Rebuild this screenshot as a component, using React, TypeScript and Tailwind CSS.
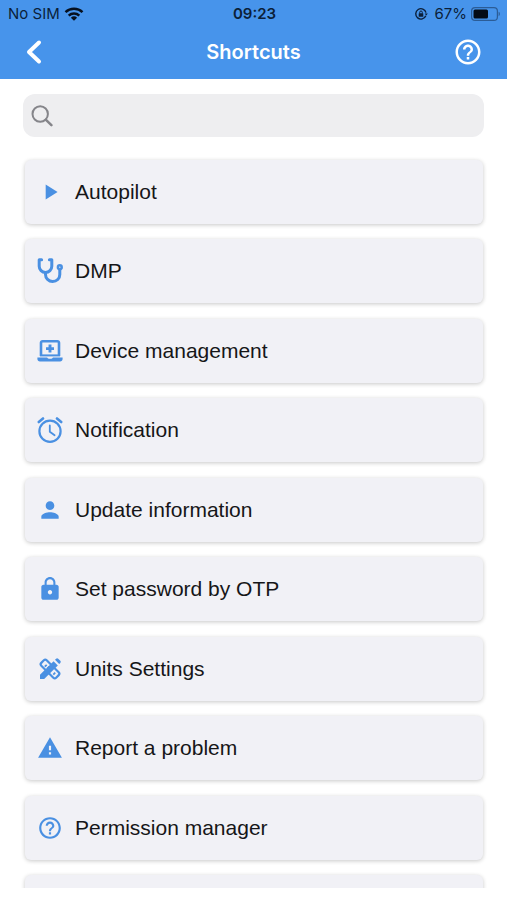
import { useState } from 'react';
import type { ComponentType } from 'react';
import {
  MdHelpOutline,
  MdLock,
  MdPerson,
  MdPlayArrow,
  MdWarning,
} from 'react-icons/md';

type IconProps = { className?: string };

type Shortcut = {
  id: string;
  label: string;
  icon?: ComponentType<IconProps>;
};

function StethoscopeIcon({ className }: IconProps) {
  return (
    <svg viewBox="0 0 26 26" fill="none" stroke="currentColor" strokeWidth="3" strokeLinecap="round" className={className}>
      <path d="M4.6 1.800H2.200v6.400a6.300 6.300 0 0 0 12.600 0V1.800h-2.400" strokeLinejoin="round" />
      <path d="M8.500 14.800v1.600a7.100 7.100 0 0 0 7.100 7.100c4.200 0 7.200-3.100 7.200-7.100v-5" />
      <circle cx="22.800" cy="9.200" r="1.900" strokeWidth="2.500" />
    </svg>
  );
}

function LaptopMedicalIcon({ className }: IconProps) {
  return (
    <svg viewBox="0 0 26 26" fill="none" className={className}>
      <path d="M4 18V4.800a1.600 1.600 0 0 1 1.600-1.600h14.800A1.600 1.600 0 0 1 22 4.800V18" stroke="currentColor" strokeWidth="2.600" />
      <path d="M3 17.400h20" stroke="currentColor" strokeWidth="2" />
      <path d="M13 6.600v8M9 10.600h8" stroke="currentColor" strokeWidth="2.900" />
      <path d="M.4 19.600h9.800c.3.800.9 1.100 1.600 1.100h2.600c.7 0 1.200-.3 1.500-1.100h9.700v1.400c0 1.400-1.100 2.500-2.500 2.500H2.900C1.500 23.500.4 22.400.4 21z" fill="currentColor" />
    </svg>
  );
}

function AlarmIcon({ className }: IconProps) {
  return (
    <svg viewBox="0 0 26 26" fill="none" stroke="currentColor" strokeWidth="2.200" className={className}>
      <circle cx="13" cy="14.2" r="10.6" />
      <path d="M12.800 8.500v6.200l4.800 3.500" strokeWidth="1.800" strokeLinecap="round" strokeLinejoin="round" />
      <path d="M1.800 5 6 1.500M20 1.500l4.200 3.500" strokeWidth="2.600" strokeLinecap="round" />
    </svg>
  );
}

// ruler crossed by a pencil
function DesignToolsIcon({ className }: IconProps) {
  return (
    <svg viewBox="0 0 26 26" fill="none" stroke="currentColor" className={className}>
      <rect x="2.500" y="9.200" width="21" height="7.600" rx="2" strokeWidth="2.200" transform="rotate(45 13 13)" />
      <path d="M7.800 10.700l1.900-1.900M10.300 12.600l1.900-1.900M16.300 18.600l1.900-1.900" strokeWidth="1.800" />
      <path d="M3 23v-4.200L16.600 5.200l4.200 4.200L7.200 23z" fill="currentColor" stroke="none" />
      <path d="m18 3.800 1.100-1.100a1.500 1.500 0 0 1 2.100 0l2.100 2.100a1.500 1.500 0 0 1 0 2.100L22.200 8z" fill="currentColor" stroke="none" />
    </svg>
  );
}

const shortcuts: Shortcut[] = [
  { id: 'autopilot', label: 'Autopilot', icon: MdPlayArrow },
  { id: 'dmp', label: 'DMP', icon: StethoscopeIcon },
  { id: 'devices', label: 'Device management', icon: LaptopMedicalIcon },
  { id: 'notification', label: 'Notification', icon: AlarmIcon },
  { id: 'update', label: 'Update information', icon: MdPerson },
  { id: 'otp', label: 'Set password by OTP', icon: MdLock },
  { id: 'units', label: 'Units Settings', icon: DesignToolsIcon },
  { id: 'report', label: 'Report a problem', icon: MdWarning },
  { id: 'permission', label: 'Permission manager', icon: MdHelpOutline },
  { id: 'more', label: '' },
];

function StatusBar() {
  return (
    <div className="grid grid-cols-3 items-center h-7 pl-2 pr-1.5 text-[15px] text-[#0b1f3a]">
      <div className="flex items-center gap-1">
        <span>No SIM</span>
        <svg viewBox="0 0 20 14" className="w-5 h-4" fill="none" stroke="#06101f" strokeWidth="2.500">
          <path d="M1.500 5.200a12.500 12.500 0 0 1 17 0" />
          <path d="M4.700 8.600a7.800 7.800 0 0 1 10.600 0" />
          <path d="M10 13.800 6.900 10.700a4.500 4.500 0 0 1 6.200 0z" fill="#06101f" stroke="none" />
        </svg>
      </div>
      <span className="text-center font-semibold">09:23</span>
      <div className="flex items-center justify-end gap-1">
        <svg viewBox="0 0 14 14" className="w-3.5 h-3.5 mr-0.5" fill="none" stroke="currentColor" strokeWidth="1.400">
          <path d="M11.800 8.800A5.200 5.200 0 1 1 12 5.600" />
          <path d="m10.600 6.400 1.700 2.200 1.500-2.200z" fill="currentColor" stroke="none" />
          <rect x="4.700" y="6.300" width="4.600" height="3.500" rx=".5" fill="currentColor" stroke="none" />
          <path d="M5.700 6.500V5.300a1.300 1.300 0 0 1 2.600 0v1.200" strokeWidth="1" />
        </svg>
        <span>67%</span>
        <svg viewBox="0 0 30 14" className="w-[30px] h-3.5" fill="none">
          <rect x=".6" y=".6" width="25.800" height="12.800" rx="3.500" stroke="#2b5c96" strokeWidth="1.200" />
          <rect x="2.500" y="2.500" width="14.500" height="9" rx="1.500" fill="#030a14" />
          <path d="M27.600 4.800c1.700.6 1.700 3.800 0 4.400z" fill="#2b5c96" />
        </svg>
      </div>
    </div>
  );
}

function App() {
  const [query, setQuery] = useState('');

  const visible = shortcuts.filter((s) =>
    s.label.toLowerCase().includes(query.toLowerCase())
  );

  return (
    <div className="flex flex-col h-screen pb-3 bg-white">
      <header className="shrink-0 bg-[#4794eb] font-['Inter',sans-serif]">
        <StatusBar />
        <nav className="grid grid-cols-[1fr_auto_1fr] items-center h-[51px] px-6 pb-1 text-white">
          <button aria-label="Back" className="justify-self-start">
            <svg viewBox="0 0 20 26" className="w-5 h-[26px]" fill="none" stroke="currentColor" strokeWidth="4" strokeLinecap="round" strokeLinejoin="round">
              <path d="M15 3.500 5 13l10 9.500" />
            </svg>
          </button>
          <h1 className="text-xl font-semibold">Shortcuts</h1>
          <button aria-label="Help" className="justify-self-end">
            <MdHelpOutline className="w-[30px] h-[30px]" />
          </button>
        </nav>
      </header>

      <main className="flex-1 min-h-0 overflow-y-auto [scrollbar-width:none] px-[23px] pt-[15px] font-['Liberation_Sans',Arial,sans-serif]">
        <label className="flex items-center h-[43px] gap-3 px-2 rounded-xl bg-[#eeeef0]">
          <svg viewBox="0 0 22 22" className="w-[22px] h-[22px] text-[#85858a]" fill="none" stroke="currentColor" strokeLinecap="round">
            <circle cx="9.200" cy="9" r="7.700" strokeWidth="2" />
            <path d="m15 14.800 5.400 5.400" strokeWidth="2.500" />
          </svg>
          <input
            type="text"
            aria-label="Search shortcuts"
            value={query}
            onChange={(e) => setQuery(e.target.value)}
            className="flex-1 min-w-0 text-xl bg-transparent outline-none"
          />
        </label>

        <ul className="mt-[23px] pl-0.5 pr-px">
          {visible.map(({ id, label, icon: Icon }) => (
            <li key={id} className="mb-[15px] even:mb-4">
              <button className="flex items-center w-full h-16 gap-3 px-3 rounded-md bg-[#f1f1f6] text-[21px] text-[#161618] text-left shadow-[0_1px_4px_rgba(0,0,0,0.22)]">
                {Icon && <Icon className="w-[26px] h-[26px] shrink-0 text-[#4a90e2]" />}
                <span>{label}</span>
              </button>
            </li>
          ))}
        </ul>
      </main>
    </div>
  );
}

export default App;
